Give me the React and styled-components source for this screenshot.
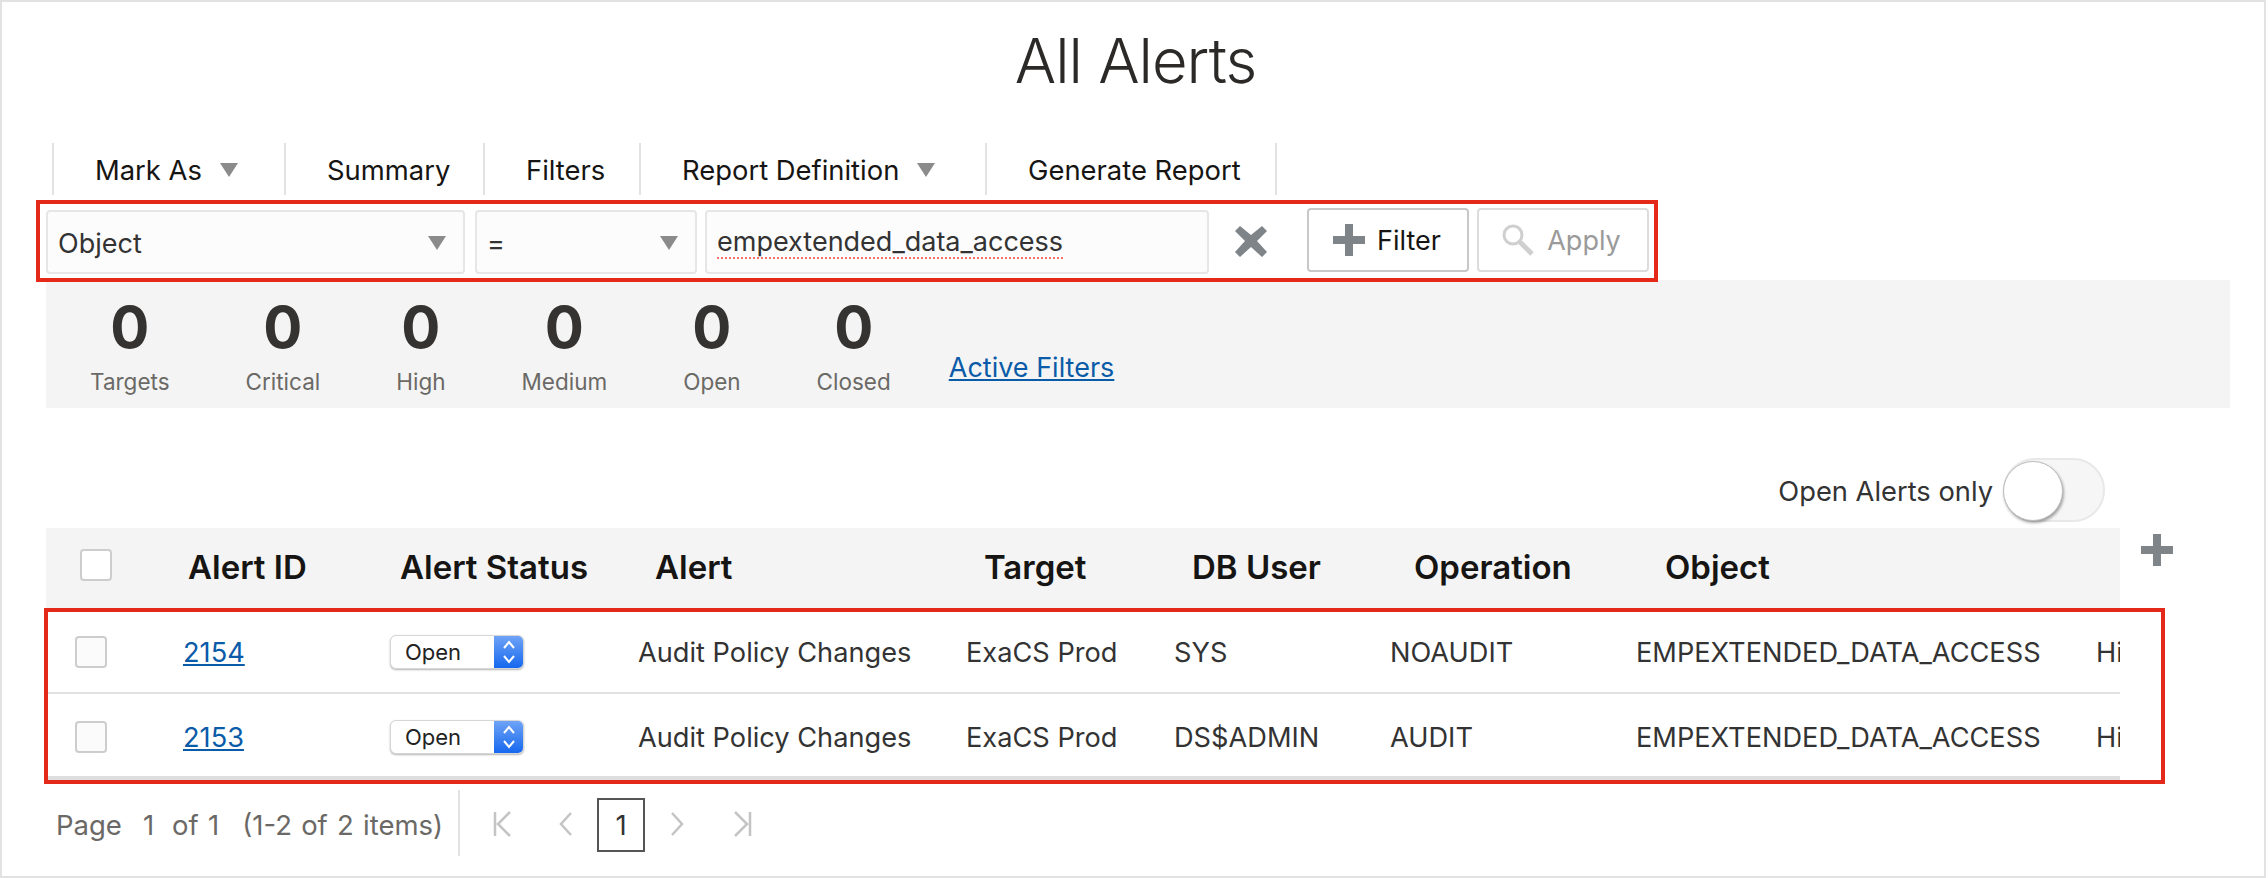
import React from 'react';
import styled, { createGlobalStyle } from 'styled-components';

const GlobalStyle = createGlobalStyle`
    html, body {
        margin: 0;
        padding: 0;
        background: #fff;
    }
    body {
        font-family: Inter, "Liberation Sans", sans-serif;
        color: #2f2d2b;
    }
`;

const Frame = styled.div`
    box-sizing: border-box;
    width: 2266px;
    height: 878px;
    border: 2px solid #e2e2e2;
    overflow: hidden;
`;

const Title = styled.h1`
    margin: 0;
    height: 141px;
    padding: 24px 0 0 5px;
    box-sizing: border-box;
    text-align: center;
    font-size: 61.5px;
    line-height: 70px;
    font-weight: 300;
    color: #2c2a28;
    letter-spacing: -1px;
`;

const Toolbar = styled.div`
    display: flex;
    height: 52px;
    margin: 0 0 5px 50px;
`;

const ToolItem = styled.div`
    box-sizing: border-box;
    width: ${(p) => p.$width}px;
    display: flex;
    align-items: center;
    gap: 18px;
    padding: 2px 0 0 41px;
    border-left: 2px solid #e2e2e2;
    border-right: ${(p) => (p.$last ? '2px solid #e2e2e2' : 'none')};
    font-size: 27.4px;
    color: #161513;
`;

const Caret = styled.i`
    width: 0;
    height: 0;
    border-left: 9px solid transparent;
    border-right: 9px solid transparent;
    border-top: 14px solid #8b8b8b;
`;

const FilterBar = styled.div`
    position: relative;
    box-sizing: border-box;
    display: flex;
    align-items: center;
    width: 1622px;
    height: 82px;
    margin-left: 34px;
    padding-left: 6px;
    border: 4px solid #e4291b;
`;

const Field = styled.div`
    box-sizing: border-box;
    flex: none;
    width: ${(p) => p.$width}px;
    height: 64px;
    margin-right: ${(p) => p.$gap || 0}px;
    margin-top: 1px;
    display: flex;
    align-items: center;
    justify-content: space-between;
    padding: 3px 17px 0 10px;
    background: #fcfcfc;
    border: 2px solid #e6e6e6;
    border-radius: 4px;
    font-size: 27px;
    color: #333;
`;

const Misspelled = styled.span`
    line-height: 30px;
    border-bottom: 2px dotted #f4706a;
`;

const ClearIcon = styled.svg`
    flex: none;
    width: 34px;
    height: 34px;
    margin: 0 39px 0 25px;
`;

const Button = styled.div`
    box-sizing: border-box;
    flex: none;
    width: ${(p) => p.$width}px;
    height: 64px;
    margin: 0 8px 2px 0;
    display: flex;
    align-items: center;
    justify-content: center;
    gap: 12px;
    padding-right: ${(p) => (p.$disabled ? 4 : 2)}px;
    background: #fff;
    border: 2px solid ${(p) => (p.$disabled ? '#dcdcdc' : '#c8c8c8')};
    border-radius: 4px;
    font-size: 27px;
    color: ${(p) => (p.$disabled ? '#9a9a9a' : '#161513')};
`;

const Stats = styled.div`
    box-sizing: border-box;
    display: flex;
    align-items: flex-start;
    gap: 76px;
    width: 2184px;
    height: 128px;
    margin: -2px 0 0 44px;
    padding: 12px 0 0 44px;
    background: #f4f4f4;
`;

const Stat = styled.div`
    display: flex;
    flex-direction: column;
    align-items: center;
`;

const StatValue = styled.div`
    font-size: 58px;
    line-height: 70px;
    font-weight: 700;
    color: #353331;
`;

const StatLabel = styled.div`
    margin-top: 6px;
    font-size: 22.5px;
    line-height: 28px;
    color: #6b6966;
`;

const StatLink = styled.a`
    margin: 60px 0 0 -18px;
    font-size: 27px;
    line-height: 32px;
    color: #0a5ba8;
    text-decoration: underline;
`;

const ToggleRow = styled.div`
    display: flex;
    align-items: center;
    justify-content: flex-end;
    gap: 10px;
    width: 2103px;
    height: 64px;
    margin: 50px 0 6px 0;
    font-size: 27.3px;
    color: #333;
`;

const ToggleLabel = styled.span`
    padding-top: 2px;
`;

const Toggle = styled.div`
    position: relative;
    box-sizing: border-box;
    width: 102px;
    height: 64px;
    background: #f6f6f6;
    border: 2px solid #e8e8e8;
    border-radius: 32px;
`;

const Knob = styled.div`
    position: absolute;
    left: -2px;
    top: 1px;
    box-sizing: border-box;
    width: 60px;
    height: 60px;
    background: #fff;
    border: 1px solid #bdbdbd;
    border-radius: 50%;
    box-shadow: 1px 2px 3px rgba(0, 0, 0, 0.35);
`;

const HeadWrap = styled.div`
    display: flex;
    align-items: flex-start;
    gap: 21px;
    margin-left: 44px;
`;

const AddIcon = styled.svg`
    width: 32px;
    height: 32px;
    margin-top: 6px;
`;

const HeadRow = styled.div`
    box-sizing: border-box;
    display: grid;
    grid-template-columns: 108px 212px 255px 329px 208px 222px 251px 1fr;
    align-items: center;
    width: 2074px;
    height: 80px;
    padding: 0 0 2px 34px;
    background: #f4f4f4;
    font-size: 33px;
    font-weight: 600;
    color: #161513;
`;

const Body = styled.div`
    box-sizing: border-box;
    width: 2121px;
    height: 176px;
    margin-left: 42px;
    border: 4px solid #e4291b;
`;

const Row = styled.div`
    box-sizing: border-box;
    display: grid;
    grid-template-columns: 108px 207px 248px 328px 208px 216px 246px 460px 200px;
    align-items: center;
    width: 2072px;
    height: ${(p) => (p.$last ? 86 : 82)}px;
    padding: ${(p) => (p.$last ? 4 : 0)}px 0 0 27px;
    overflow: hidden;
    border-bottom: ${(p) => (p.$last ? 4 : 2)}px solid ${(p) => (p.$last ? '#dedede' : '#e2e2e2')};
    font-size: 27.2px;
    color: #333;
`;

const Check = styled.div`
    box-sizing: border-box;
    width: 32px;
    height: 32px;
    margin-bottom: ${(p) => (p.$head ? 4 : 0)}px;
    background: ${(p) => (p.$head ? '#fff' : '#fbfbfb')};
    border: 2px solid #cdcdcd;
    border-radius: 4px;
`;

const IdLink = styled.a`
    color: #0a5ba8;
    text-decoration: underline;
`;

const StatusSelect = styled.div`
    box-sizing: border-box;
    display: flex;
    justify-content: space-between;
    width: 134px;
    height: 34px;
    background: #fff;
    border: 1px solid #d6d6d6;
    border-radius: 6px;
    box-shadow: 0 1px 2px rgba(0, 0, 0, 0.3);
    overflow: hidden;
    font-size: 22px;
    line-height: 32px;
    color: #222;
`;

const StatusText = styled.span`
    padding-left: 14px;
`;

const Stepper = styled.div`
    display: flex;
    align-items: center;
    justify-content: center;
    width: 29px;
    background: linear-gradient(#6fa3f6, #1668ef);
`;

const Pager = styled.div`
    display: flex;
    align-items: center;
    height: 66px;
    margin: 6px 0 0 54px;
    font-size: 27.5px;
    color: #6b6966;
`;

const PagerText = styled.span`
    padding-top: 3px;
    margin-right: ${(p) => p.$gap}px;
    word-spacing: 1.5px;
`;

const PagerDivider = styled.div`
    width: 2px;
    height: 66px;
    margin: 0 30px 0 15px;
    background: #e2e2e2;
`;

const PagerIcon = styled.svg`
    width: 24px;
    height: 28px;
    margin: 2px ${(p) => p.$gap}px 0 0;
    fill: none;
    stroke: #c4c4c4;
    stroke-width: 2.5;
`;

const PageBox = styled.div`
    box-sizing: border-box;
    width: 48px;
    height: 54px;
    margin: 4px 20px 0 0;
    display: flex;
    align-items: center;
    justify-content: center;
    border: 2px solid #555;
    color: #333;
`;

const alerts = [
    { id: '2154', user: 'SYS', op: 'NOAUDIT' },
    { id: '2153', user: 'DS$ADMIN', op: 'AUDIT' },
];

const stats = ['Targets', 'Critical', 'High', 'Medium', 'Open', 'Closed'];
const headers = ['Alert ID', 'Alert Status', 'Alert', 'Target', 'DB User', 'Operation', 'Object'];

function App() {
    return (
        <Frame>
            <GlobalStyle />
            <Title>All Alerts</Title>
            <Toolbar>
                <ToolItem $width={232}>Mark As <Caret /></ToolItem>
                <ToolItem $width={199}>Summary</ToolItem>
                <ToolItem $width={156}>Filters</ToolItem>
                <ToolItem $width={346}>Report Definition <Caret /></ToolItem>
                <ToolItem $width={292} $last>Generate Report</ToolItem>
            </Toolbar>
            <FilterBar>
                <Field $width={419} $gap={10}>Object <Caret /></Field>
                <Field $width={222} $gap={8}>= <Caret /></Field>
                <Field $width={504}><Misspelled>empextended_data_access</Misspelled></Field>
                <ClearIcon viewBox="0 0 34 34">
                    <path d="M6 2 L17 11 L28 2 L33 7 L23 17 L33 28 L28 33 L17 23 L6 33 L1 28 L11 17 L1 7 Z" fill="#7f8488" />
                </ClearIcon>
                <Button $width={162}>
                    <svg width="32" height="32" viewBox="0 0 32 32">
                        <path d="M12 0 H20 V12 H32 V20 H20 V32 H12 V20 H0 V12 H12 Z" fill="#7f8488" />
                    </svg>
                    Filter
                </Button>
                <Button $width={172} $disabled>
                    <svg width="34" height="34" viewBox="0 0 34 34" fill="none" stroke="#cfcfcf">
                        <circle cx="12" cy="12" r="9" strokeWidth="3" />
                        <path d="M19 19 L31 31" strokeWidth="5" />
                    </svg>
                    Apply
                </Button>
            </FilterBar>
            <Stats>
                {stats.map((label) => (
                    <Stat key={label}>
                        <StatValue>0</StatValue>
                        <StatLabel>{label}</StatLabel>
                    </Stat>
                ))}
                <StatLink href="#">Active Filters</StatLink>
            </Stats>
            <ToggleRow>
                <ToggleLabel>Open Alerts only</ToggleLabel>
                <Toggle><Knob /></Toggle>
            </ToggleRow>
            <HeadWrap>
                <HeadRow>
                    <Check $head />
                    {headers.map((h) => <span key={h}>{h}</span>)}
                </HeadRow>
                <AddIcon viewBox="0 0 32 32">
                    <path d="M12 0 H20 V12 H32 V20 H20 V32 H12 V20 H0 V12 H12 Z" fill="#7f8488" />
                </AddIcon>
            </HeadWrap>
            <Body>
                {alerts.map((a, i) => (
                    <Row key={a.id} $last={i === alerts.length - 1}>
                        <Check />
                        <span><IdLink href="#">{a.id}</IdLink></span>
                        <StatusSelect>
                            <StatusText>Open</StatusText>
                            <Stepper>
                                <svg width="14" height="26" viewBox="0 0 14 26" fill="none" stroke="#fff" strokeWidth="2">
                                    <path d="M2 9 L7 3 L12 9" />
                                    <path d="M2 17 L7 23 L12 17" />
                                </svg>
                            </Stepper>
                        </StatusSelect>
                        <span>Audit Policy Changes</span>
                        <span>ExaCS Prod</span>
                        <span>{a.user}</span>
                        <span>{a.op}</span>
                        <span>EMPEXTENDED_DATA_ACCESS</span>
                        <span>High</span>
                    </Row>
                ))}
            </Body>
            <Pager>
                <PagerText $gap={21}>Page</PagerText>
                <PagerText $gap={18}>1</PagerText>
                <PagerText $gap={23}>of 1</PagerText>
                <PagerText $gap={0}>(1-2 of 2 items)</PagerText>
                <PagerDivider />
                <PagerIcon viewBox="0 0 24 28" $gap={40}>
                    <path d="M5 2 V26 M20 2 L8 14 L20 26" />
                </PagerIcon>
                <PagerIcon viewBox="0 0 24 28" $gap={19}>
                    <path d="M17 3 L7 14 L17 25" />
                </PagerIcon>
                <PageBox>1</PageBox>
                <PagerIcon viewBox="0 0 24 28" $gap={42}>
                    <path d="M7 3 L17 14 L7 25" />
                </PagerIcon>
                <PagerIcon viewBox="0 0 24 28" $gap={0}>
                    <path d="M19 2 V26 M4 2 L16 14 L4 26" />
                </PagerIcon>
            </Pager>
        </Frame>
    );
}

export default App;
